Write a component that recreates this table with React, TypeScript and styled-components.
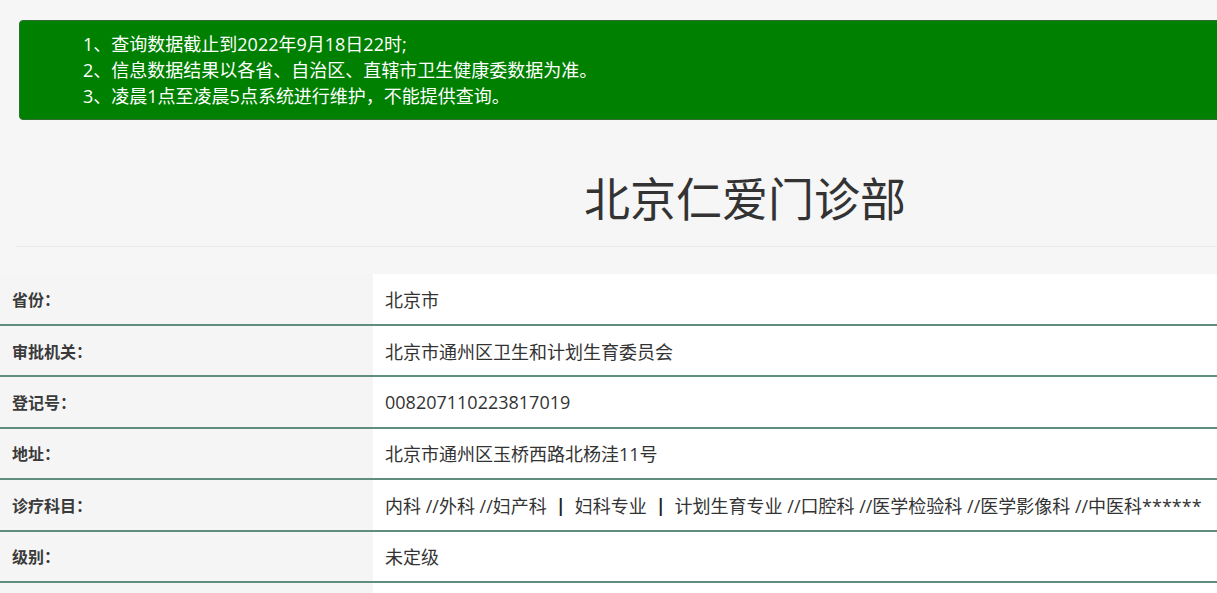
import React from "react";
import styled, { createGlobalStyle } from "styled-components";

const GlobalStyle = createGlobalStyle`
  html, body {
    margin: 0;
    padding: 0;
    background: #f6f6f6;
    overflow: hidden;
  }
  body {
    font-family: "Open Sans", "Noto Sans CJK SC", sans-serif;
    color: #333;
  }
`;

const Viewport = styled.div`
  width: 100vw;
  overflow: hidden;
`;

const Page = styled.div`
  width: 1474px;
`;

const Notice = styled.div`
  margin: 20px 0 0 19px;
  height: 100px;
  box-sizing: border-box;
  background: #008000;
  border: 1px solid #2f6f2f;
  border-radius: 4px;
  padding: 10px 0 10px 63px;
  color: #fff;
  font-size: 18px;
  line-height: 26px;
`;

const NoticeLine = styled.div`
  white-space: nowrap;
`;

const Header = styled.div`
  margin-left: 16px;
  padding: 53px 0 22px;
  border-bottom: 1px solid #ebebeb;
  text-align: center;
`;

const Title = styled.h1`
  margin: 0;
  font-size: 46px;
  line-height: 51px;
  font-weight: 400;
  color: #333;
`;

const Table = styled.div`
  margin-top: 27px;
  display: flex;
  flex-direction: column;
`;

const Row = styled.div`
  display: grid;
  grid-template-columns: 373px 1fr;
  height: 51.4px;
  box-sizing: border-box;
  border-bottom: 2px solid #5f8e80;

  &:first-child {
    height: 52px;
  }
`;

const Label = styled.div`
  display: flex;
  align-items: center;
  padding-left: 12px;
  background: #f5f5f5;
  font-size: 16px;
  font-weight: 700;
  color: #3a3a3a;
`;

const Value = styled.div`
  display: flex;
  align-items: center;
  padding-left: 12px;
  background: #fff;
  font-size: 18px;
  color: #333;
  white-space: nowrap;
`;

const Bar = styled.span`
  font-weight: 700;
  color: #222;
  margin: 0 9px;
`;

const rows: { label: string; value: React.ReactNode }[] = [
  { label: "省份：", value: "北京市" },
  { label: "审批机关：", value: "北京市通州区卫生和计划生育委员会" },
  { label: "登记号：", value: "008207110223817019" },
  { label: "地址：", value: "北京市通州区玉桥西路北杨洼11号" },
  {
    label: "诊疗科目：",
    value: (
      <>
        内科 //外科 //妇产科<Bar>|</Bar>妇科专业<Bar>|</Bar>计划生育专业 //口腔科 //医学检验科 //医学影像科 //中医科******
      </>
    ),
  },
  { label: "级别：", value: "未定级" },
  { label: "", value: "" },
];

export default function App() {
  return (
    <Viewport>
      <GlobalStyle />
      <Page>
        <Notice>
          <NoticeLine>1、查询数据截止到2022年9月18日22时;</NoticeLine>
          <NoticeLine>2、信息数据结果以各省、自治区、直辖市卫生健康委数据为准。</NoticeLine>
          <NoticeLine>3、凌晨1点至凌晨5点系统进行维护，不能提供查询。</NoticeLine>
        </Notice>
        <Header>
          <Title>北京仁爱门诊部</Title>
        </Header>
        <Table>
          {rows.map((r, i) => (
            <Row key={i}>
              <Label>{r.label}</Label>
              <Value>{r.value}</Value>
            </Row>
          ))}
        </Table>
      </Page>
    </Viewport>
  );
}
